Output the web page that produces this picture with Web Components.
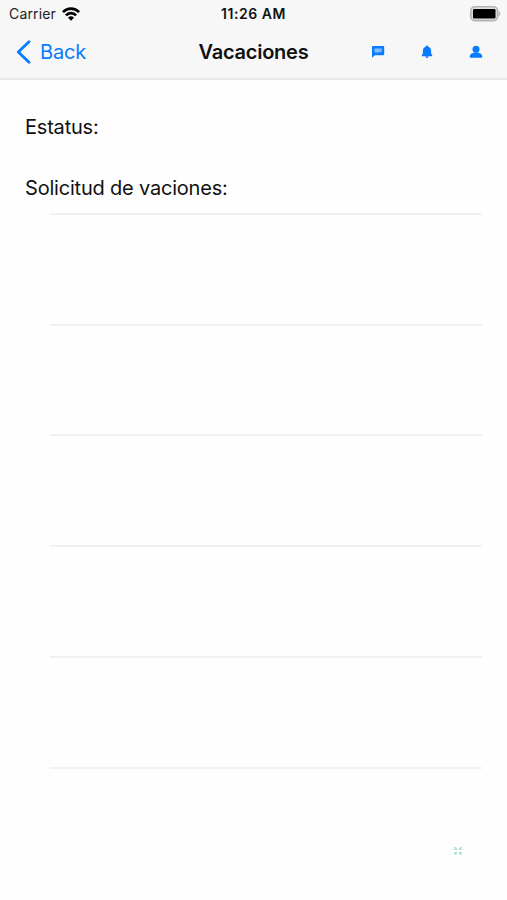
<!DOCTYPE html>
<html lang="es">
<head>
<meta charset="utf-8">
<title>Vacaciones</title>
<style>
  body {
    margin: 0;
    background: #fefefe;
    color: #111;
    font-family: Inter, "Liberation Sans", sans-serif;
  }
</style>
</head>
<body>
<vacation-screen></vacation-screen>

<script>
class StatusBar extends HTMLElement {

    constructor() {
        super();
        this.shadowDOM = this.attachShadow({ mode: "open" });
    }

    connectedCallback() {
        this.render();
    }

    render() {
        this.shadowDOM.innerHTML = `
        <style>
          :host {
            display: grid;
            grid-template-columns: 1fr auto 1fr;
            align-items: center;
            height: 27px;
            padding: 0 6px;
            font-size: 14px;
            line-height: 27px;
            white-space: nowrap;
          }

          .carrier {
            display: flex;
            align-items: center;
            gap: 6px;
            padding-left: 3px;
            color: #222;
            letter-spacing: 0.15px;
          }

          .time {
            font-weight: 600;
            letter-spacing: 0.55px;
          }

          .battery {
            justify-self: end;
          }

          svg {
            display: block;
          }
        </style>

        <div class="carrier">
          <span>Carrier</span>
          <svg width="18" height="14" viewBox="0 0 18 14" fill="none" stroke="#000" stroke-width="2.6">
            <path d="M.9 5.200C5.500 .4 12.500 .4 17.100 5.200"/>
            <path d="M3.900 8.400C6.700 5.400 11.300 5.400 14.100 8.400"/>
            <path d="M6 10.700C7.700 8.900 10.300 8.900 12 10.700L9 13.700z" fill="#000" stroke="none"/>
          </svg>
        </div>
        <span class="time"><slot></slot></span>
        <svg class="battery" width="31" height="16" viewBox="0 0 31 16">
          <rect x=".8" y=".8" width="26.800" height="13.800" rx="4" fill="#e0e0e0" stroke="#b3b3b3" stroke-width="1.600"/>
          <path d="M28.700 5.300c2.200.6 2.200 4.200 0 4.800z" fill="#b3b3b3"/>
          <rect x="3" y="3" width="22.500" height="9.500" rx="1.300"/>
        </svg>`;
    }
}

class NavBar extends HTMLElement {

    constructor() {
        super();
        this.shadowDOM = this.attachShadow({ mode: "open" });
    }

    connectedCallback() {
        this.render();
    }

    render() {
        this.shadowDOM.innerHTML = `
        <style>
          :host {
            display: grid;
            grid-template-columns: 1fr auto 1fr;
            align-items: center;
            height: 50px;
            padding: 0 16px 1px;
            color: #087cff;
            font-size: 20px;
            white-space: nowrap;
          }

          .back {
            display: flex;
            align-items: center;
            gap: 9px;
            letter-spacing: -0.15px;
          }

          h1 {
            margin: 0;
            color: #111;
            font-size: 20px;
            font-weight: 600;
            letter-spacing: -0.25px;
          }

          .actions {
            display: flex;
            justify-content: flex-end;
            gap: 35px;
            padding-right: 8px;
          }

          svg {
            display: block;
          }
        </style>

        <div class="back">
          <svg width="15" height="24" viewBox="0 0 15 24" fill="none" stroke="currentColor" stroke-width="2.800" stroke-linecap="round" stroke-linejoin="round">
            <path d="M13 1.800L2.300 12L13 22.200"/>
          </svg>
          <span>Back</span>
        </div>
        <h1><slot></slot></h1>
        <div class="actions">
          <svg width="14" height="14" viewBox="0 0 14 14">
            <path d="M2 1h10.200q1 0 1 1v7.200q0 1-1 1H4l-3 2.600V2q0-1 1-1z" fill="currentColor"/>
            <path d="M3.500 3.500h7.200v4H3.500z" fill="#8fc3ff"/>
            <path d="M3.500 4.800h7.200M3.500 6.500h7.200" stroke="#5ca7ff" stroke-width=".5"/>
            <path d="M8.500 7h2.500v1H8.500z" fill="currentColor"/>
          </svg>
          <svg width="14" height="14" viewBox="0 0 14 14" fill="currentColor">
            <path d="M7 .5c-.8 0-1.200.5-1.200 1.200C3.900 2.200 2.900 3.700 2.900 5.600v3L1.800 10v1.200h10.400V10l-1.100-1.400v-3c0-1.900-1-3.400-2.900-3.900C8.200 1 7.800.5 7 .5zM5.500 11.600a1.500 1.500 0 0 0 3 0z"/>
          </svg>
          <svg width="14" height="14" viewBox="0 0 14 14" fill="currentColor">
            <circle cx="7" cy="4.300" r="3.500"/>
            <path d="M.8 12.700v-1.300C.8 9.300 3.500 7.600 7 7.600s6.200 1.700 6.200 3.800v1.300z"/>
          </svg>
        </div>`;
    }
}

class FieldLabel extends HTMLElement {

    constructor() {
        super();
        this.shadowDOM = this.attachShadow({ mode: "open" });
    }

    connectedCallback() {
        this.render();
    }

    render() {
        this.shadowDOM.innerHTML = `
        <style>
          :host {
            display: block;
            height: 61px;
            font-size: 20px;
            line-height: 30px;
            letter-spacing: -0.2px;
            white-space: nowrap;
          }
        </style>

        <slot></slot>`;
    }
}

class RequestList extends HTMLElement {

    constructor() {
        super();
        this.shadowDOM = this.attachShadow({ mode: "open" });
    }

    connectedCallback() {
        this.render();
    }

    render() {
        this.shadowDOM.innerHTML = `
        <style>
          :host {
            display: block;
          }

          .row {
            box-sizing: border-box;
            height: 110.8px;
            border-top: 2px solid #f1f1f1;
          }

          .row:last-child {
            height: 2px;
          }
        </style>

        ${'<div class="row"></div>'.repeat(6)}`;
    }
}

class VacationScreen extends HTMLElement {

    constructor() {
        super();
        this.shadowDOM = this.attachShadow({ mode: "open" });
    }

    connectedCallback() {
        this.render();
    }

    render() {
        this.shadowDOM.innerHTML = `
        <style>
          :host {
            display: flex;
            flex-direction: column;
            box-sizing: border-box;
            height: 900px;
            overflow: hidden;
          }

          header {
            background: #f7f7f7;
            border-bottom: 2px solid #e9e9e9;
          }

          .fields {
            padding: 32px 25px 0;
          }

          request-list {
            margin: -21.2px 25px 0 50px;
          }

          footer {
            display: flex;
            justify-content: flex-end;
            margin-top: auto;
            padding: 0 44px 44px 0;
          }
        </style>

        <header>
          <status-bar>11:26 AM</status-bar>
          <nav-bar>Vacaciones</nav-bar>
        </header>
        <section class="fields">
          <field-label>Estatus:</field-label>
          <field-label>Solicitud de vaciones:</field-label>
        </section>
        <request-list></request-list>
        <footer>
          <svg width="10" height="10" viewBox="0 0 10 10" fill="#a9e0d3">
            <path d="M1 1h1.500L4 2.500V4H1V3h1zM9 1H7.500L6 2.500V4h3V3H8zM1 9h1.500L4 7.500V6H1v1h1zM9 9H7.500L6 7.500V6h3v1H8z"/>
          </svg>
        </footer>`;
    }
}

customElements.define("status-bar", StatusBar);
customElements.define("nav-bar", NavBar);
customElements.define("field-label", FieldLabel);
customElements.define("request-list", RequestList);
customElements.define("vacation-screen", VacationScreen);
</script>
</body>
</html>
